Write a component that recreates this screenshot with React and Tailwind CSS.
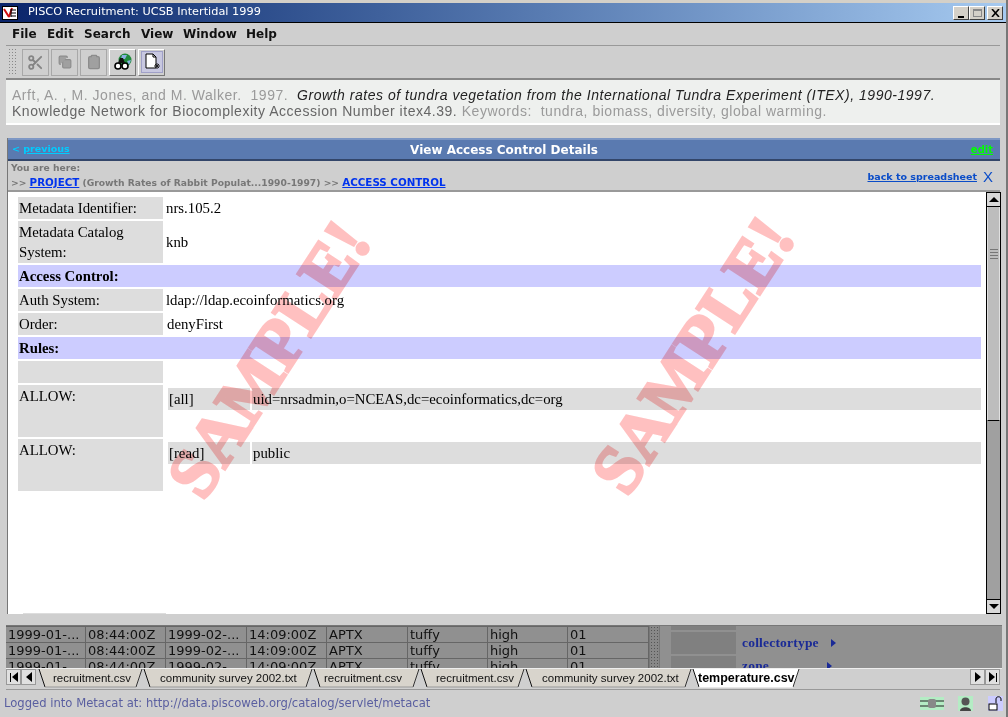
import React from 'react';
import { Scissors, Copy, Clipboard } from 'lucide-react';

const sans = "font-['DejaVu_Sans',sans-serif]";
const arial = "font-['Liberation_Sans',Arial,sans-serif]";
const serif = "font-['Liberation_Serif','Times_New_Roman',serif]";

const menus = [
  { name: 'File', w: 'w-[35px]' },
  { name: 'Edit', w: 'w-[37px]' },
  { name: 'Search', w: 'w-[57px]' },
  { name: 'View', w: 'w-[42px]' },
  { name: 'Window', w: 'w-[63px]' },
  { name: 'Help', w: 'w-[40px]' },
];

const dataRows = [
  ['1999-01-...', '08:44:00Z', '1999-02-...', '14:09:00Z', 'APTX', 'tuffy', 'high', '01'],
  ['1999-01-...', '08:44:00Z', '1999-02-...', '14:09:00Z', 'APTX', 'tuffy', 'high', '01'],
  ['1999-01-...', '08:44:00Z', '1999-02-...', '14:09:00Z', 'APTX', 'tuffy', 'high', '01'],
];

const tabs = [
  { name: 'recruitment.csv', w: 105, pad: 'pl-[15px]' },
  { name: 'community survey 2002.txt', w: 170, pad: 'pl-[17px]' },
  { name: 'recruitment.csv', w: 107, pad: 'pl-[11px]' },
  { name: 'recruitment.csv', w: 105, pad: 'pl-[16px]' },
  { name: 'community survey 2002.txt', w: 167, pad: 'pl-[17px]' },
  { name: 'temperature.csv', w: 108, pad: 'pl-[6px]', active: true },
];

function Tab({ tab }) {
  const h = 19;
  return (
    <div className="relative h-[19px] shrink-0" style={{ width: tab.w }}>
      <svg className="absolute inset-0" width={tab.w} height={h}>
        <polygon
          points={`1,0 7,${h - 1} ${tab.w - 7},${h - 1} ${tab.w - 1},0`}
          fill={tab.active ? '#ffffff' : '#d8d4cc'}
        />
        <line x1="1" y1="0" x2="7" y2={h - 1} stroke="#111" />
        <line x1={tab.w - 7} y1={h - 1} x2={tab.w - 1} y2="0" stroke="#333" />
        <line x1="7" y1={h - 1} x2={tab.w - 7} y2={h - 1} stroke={tab.active ? '#fff' : '#999'} />
      </svg>
      <span
        className={`relative block ${tab.pad} ${arial} leading-[19px] whitespace-nowrap ${tab.active ? 'font-bold text-[12.5px] text-black' : 'text-[11.5px] text-[#111]'}`}
      >
        {tab.name}
      </span>
    </div>
  );
}

function ToolBtn({ children, on }) {
  return (
    <div
      className={`w-[27px] h-[27px] flex items-center justify-center border ${
        on ? 'border-t-white border-l-white border-r-[#777] border-b-[#777]' : 'border-[#a8a8a8]'
      }`}
    >
      {children}
    </div>
  );
}

function NavBtn({ children }) {
  return (
    <div className="w-[15px] h-[16px] flex items-center justify-center bg-[#e0e0e0] border border-[#999] text-black">
      {children}
    </div>
  );
}

function Label({ children, className = '' }) {
  return <div className={`bg-[#dddddd] px-px ${className}`}>{children}</div>;
}

function Sample({ className }) {
  return (
    <div
      className={`absolute ${className} -rotate-[57deg] ${serif} font-bold text-[69px] leading-none text-[#ffc0c0] [-webkit-text-stroke:3px_#ffc0c0] mix-blend-multiply whitespace-nowrap pointer-events-none`}
    >
      SAMPLE!
    </div>
  );
}

const App = () => {
  return (
    <div className="w-[1008px] h-[717px] overflow-hidden bg-[#cfcfcf] flex flex-col border-r-2 border-r-[#777]">
      {/* title bar */}
      <div className="h-[3px] bg-[#d4d0c8] shrink-0" />
      <div className="h-[19px] shrink-0 flex items-center bg-gradient-to-r from-[#0a246a] to-[#a6caf0] pl-[2px] pr-[3px]">
        <svg width="16" height="14" viewBox="0 0 16 14" className="mr-[10px]">
          <rect width="16" height="14" fill="#000" />
          <rect x="1" y="1" width="14" height="12" fill="#fff" />
          <path d="M2 3 L7 11 M7 11 L10 2" stroke="#d01010" strokeWidth="2" fill="none" />
          <path d="M9 4 H14 M9 7 H14 M9 10 H14 M9 3 V11" stroke="#000" strokeWidth="1" fill="none" />
        </svg>
        <span className={`${sans} text-white text-[11.3px] whitespace-nowrap`}>PISCO Recruitment: UCSB Intertidal 1999</span>
        <div className="ml-auto flex items-center">
          <div className="w-[16px] h-[14px] bg-[#d4d0c8] border border-t-white border-l-white border-r-[#404040] border-b-[#404040] flex items-end justify-center pb-[1px]">
            <div className="w-[6px] h-[2px] bg-black" />
          </div>
          <div className="w-[16px] h-[14px] bg-[#d4d0c8] border border-t-white border-l-white border-r-[#404040] border-b-[#404040] flex items-center justify-center">
            <div className="w-[9px] h-[8px] border border-[#888] border-t-2" />
          </div>
          <div className="w-[16px] h-[14px] ml-[2px] bg-[#d4d0c8] border border-t-white border-l-white border-r-[#404040] border-b-[#404040] flex items-center justify-center">
            <svg width="9" height="8" viewBox="0 0 9 8"><path d="M1 0 L8 8 M8 0 L1 8" stroke="#000" strokeWidth="1.6" /></svg>
          </div>
        </div>
      </div>
      <div className="h-[1px] bg-black shrink-0" />

      {/* menu */}
      <div className="h-[22px] flex items-center pl-[12px] shrink-0">
        {menus.map((m) => (
          <span key={m.name} className={`${m.w} ${sans} font-bold text-[12px] text-[#111]`}>
            {m.name}
          </span>
        ))}
      </div>
      <div className="h-[1px] bg-[#999] ml-[6px] mr-[6px] shrink-0" />

      {/* toolbar */}
      <div className="h-[32px] flex items-center pl-[8px] gap-[2px] shrink-0">
        <div className="w-[9px] h-[28px] mr-[3px] bg-[radial-gradient(#888_1px,transparent_1px)] bg-[length:3px_3px]" />
        <ToolBtn><Scissors size={17} strokeWidth={2.6} className="text-[#858585]" /></ToolBtn>
        <ToolBtn><Copy size={14} strokeWidth={2} fill="#a0a0a0" className="text-[#8c8c8c]" /></ToolBtn>
        <ToolBtn><Clipboard size={16} strokeWidth={2} fill="#a0a0a0" className="text-[#8c8c8c]" /></ToolBtn>
        <ToolBtn on>
          <svg width="20" height="18" viewBox="0 0 20 18">
            <circle cx="12" cy="7" r="6.5" fill="#1f8a3a" />
            <path d="M9 2 L14 2 L12 6 L8 6Z" fill="#88b0e0" />
            <path d="M14 8 L18 7 L16 12Z" fill="#88b0e0" />
            <circle cx="5" cy="13" r="3" fill="#fff" stroke="#000" strokeWidth="1.6" />
            <circle cx="12" cy="13" r="3" fill="#fff" stroke="#000" strokeWidth="1.6" />
            <path d="M5 10 L7 5 L10 5 L12 10" fill="#111" />
          </svg>
        </ToolBtn>
        <ToolBtn on>
          <div className="w-[22px] h-[22px] bg-[#c8c8e0] border border-[#a0a0c8] flex items-center justify-center">
            <svg width="16" height="18" viewBox="0 0 16 18">
              <path d="M2 1 H9 L12 4 V15 H2 Z" fill="#fff" stroke="#000" />
              <path d="M9 1 V4 H12" fill="none" stroke="#000" />
              <path d="M11 11 L15 15 M15 11 L11 15 M13 10 V16 M10 13 H16" stroke="#222" />
            </svg>
          </div>
        </ToolBtn>
      </div>

      {/* citation */}
      <div className={`h-[47px] ml-[6px] mr-[6px] shrink-0 bg-[#eef0ee] border-t-2 border-[#888] border-b-2 border-b-white pl-[6px] pt-[7px] ${arial} text-[14px] leading-[16px] tracking-[0.53px] text-[#9a9a9a] whitespace-nowrap overflow-hidden`}>
        <div>
          Arft, A. , M. Jones, and M. Walker.&nbsp; 1997.&nbsp; <i className="text-[#222]">Growth rates of tundra vegetation from the International Tundra Experiment (ITEX), 1990-1997.</i>
        </div>
        <div>
          <span className="text-[#666]">Knowledge Network for Biocomplexity Accession Number itex4.39.</span> Keywords:&nbsp; tundra, biomass, diversity, global warming.
        </div>
      </div>

      <div className="h-[13px] shrink-0" />

      {/* main panel */}
      <div className="relative flex flex-col flex-1 ml-[7px] mr-[3px] min-h-0 border-l border-[#777]">
        <div className={`h-[23px] mr-[3px] shrink-0 relative flex items-center justify-between pl-[4px] pr-[5px] bg-[#5a7ab0] border-t-2 border-t-[#7d97c4] border-b-2 border-b-[#33466a] ${sans}`}>
          <span className="text-[9.5px] font-bold text-[#00ccff]">&lt; <span className="underline">previous</span></span>
          <span className="absolute left-0 right-0 text-center text-[12px] font-bold text-white">View Access Control Details</span>
          <span className="text-[10px] font-bold text-[#00ff00] underline mr-[2px]">edit</span>
        </div>
        <div className={`h-[31px] mr-[3px] shrink-0 flex items-end justify-between bg-[#cfcfcf] border-b-2 border-[#999] pl-[3px] pr-[7px] ${sans} text-[9.2px] font-bold text-[#777] leading-[15px]`}>
          <div>
            <div>You are here:</div>
            <div className="whitespace-nowrap">
              &gt;&gt; <span className="text-[#0033ee] underline text-[10.3px]">PROJECT</span> (Growth Rates of Rabbit Populat...1990-1997) &gt;&gt; <span className="text-[#0033ee] underline text-[10.3px]">ACCESS CONTROL</span>
            </div>
          </div>
          <div className="flex items-center gap-[6px] pb-[6px] text-[#0a4cc8]">
            <span className="underline text-[9.5px]">back to spreadsheet</span>
            <span className={`${arial} font-normal text-[15px]`}>X</span>
          </div>
        </div>

        <div className="relative flex-1 flex min-h-0 bg-white">
          <div className={`relative flex-1 overflow-hidden pl-[10px] pt-[5px] ${serif} text-[14.8px] leading-[22px] text-black`}>
            <div className="grid grid-cols-[145px_816px] gap-[2px]">
              <Label>Metadata Identifier:</Label>
              <div className="pl-px">nrs.105.2</div>

              <Label className="h-[42px] leading-[20px] pt-px">Metadata Catalog<br />System:</Label>
              <div className="pl-px flex items-center">knb</div>

              <div className="col-span-2 bg-[#ccccff] font-bold px-px">Access Control:</div>

              <Label>Auth System:</Label>
              <div className="pl-px">ldap://ldap.ecoinformatics.org</div>

              <Label>Order:</Label>
              <div className="pl-[2px]">denyFirst</div>

              <div className="col-span-2 bg-[#ccccff] font-bold px-px">Rules:</div>

              <Label className="h-[22px]" />
              <div />

              <Label className="h-[52px]">ALLOW:</Label>
              <div className="pl-[3px] pt-[3px]">
                <div className="grid grid-cols-[82px_1fr] gap-[2px]">
                  <div className="bg-[#dddddd] px-px">[all]</div>
                  <div className="bg-[#dddddd] px-px">uid=nrsadmin,o=NCEAS,dc=ecoinformatics,dc=org</div>
                </div>
              </div>

              <Label className="h-[52px]">ALLOW:</Label>
              <div className="pl-[3px] pt-[3px]">
                <div className="grid grid-cols-[82px_1fr] gap-[2px]">
                  <div className="bg-[#dddddd] px-px">[read]</div>
                  <div className="bg-[#dddddd] px-px">public</div>
                </div>
              </div>
            </div>
            <div className="absolute bottom-0 left-[15px] w-[143px] h-px bg-[#ddd]" />
            <Sample className="left-[106px] top-[133px]" />
            <Sample className="left-[530px] top-[129px]" />
          </div>

          {/* scrollbar */}
          <div className="w-[15px] flex flex-col shrink-0 bg-[#a0a0a0] border-x border-black">
            <div className="h-[15px] bg-[#d8d8d8] border-y border-black flex items-center justify-center">
              <div className="w-0 h-0 border-x-[5px] border-x-transparent border-b-[5px] border-b-black" />
            </div>
            <div className="h-[214px] bg-[#bdbdbd] border-x border-[#e0e0e0] border-b border-b-black flex flex-col items-center gap-[2px] pt-[42px]">
              <div className="w-[8px] h-px bg-[#777]" />
              <div className="w-[8px] h-px bg-[#777]" />
              <div className="w-[8px] h-px bg-[#777]" />
              <div className="w-[8px] h-px bg-[#777]" />
            </div>
            <div className="flex-1" />
            <div className="h-[15px] bg-[#d8d8d8] border-y border-black flex items-center justify-center">
              <div className="w-0 h-0 border-x-[5px] border-x-transparent border-t-[5px] border-t-black" />
            </div>
          </div>
          <div className="w-[2px] shrink-0 bg-[#cfcfcf]" />
        </div>
      </div>

      <div className="h-[11px] shrink-0" />

      {/* spreadsheet strip */}
      <div className="h-[44px] shrink-0 ml-[6px] mr-[4px] border-y border-[#eeeeee] flex overflow-hidden bg-[#909090] border-t-[#777]">
        <div className={`w-[643px] shrink-0 ${sans} text-[13px] text-[#111]`}>
          {dataRows.map((row, i) => (
            <div key={i} className="grid grid-cols-[80px_80px_81px_80px_81px_80px_80px_81px] h-[16px] border-t border-[#666]">
              {row.map((c, j) => (
                <div key={j} className="pl-[2px] border-r border-[#666] leading-[15px] whitespace-nowrap overflow-hidden">
                  {c}
                </div>
              ))}
            </div>
          ))}
        </div>
        <div className="w-[11px] shrink-0 bg-[#888] border-x border-[#777] bg-[radial-gradient(#555_1px,transparent_1px)] bg-[length:3px_3px]" />
        <div className="flex-1 flex flex-col gap-[2px] pl-[11px]">
          <div className="h-[4px] shrink-0 w-[65px] bg-[#808080]" />
          <div className="flex items-center h-[22px] shrink-0">
            <div className="w-[65px] h-[22px] bg-[#808080]" />
            <span className={`${serif} font-bold text-[13.5px] tracking-[0.2px] text-[#1a2a96] ml-[6px]`}>collectortype</span>
            <div className="ml-[12px] w-0 h-0 border-y-[4px] border-y-transparent border-l-[5px] border-l-[#1a2a96]" />
          </div>
          <div className="flex items-start h-[14px] shrink-0">
            <div className="w-[65px] h-[14px] bg-[#808080]" />
            <span className={`${serif} font-bold text-[13.5px] tracking-[0.2px] leading-[15px] mt-[2px] text-[#1a2a96] ml-[6px]`}>zone</span>
            <div className="ml-[58px] mt-[6px] w-0 h-0 border-y-[4px] border-y-transparent border-l-[5px] border-l-[#1a2a96]" />
          </div>
        </div>
      </div>

      {/* tabs */}
      <div className="h-[21px] shrink-0 flex items-start ml-[6px] mr-[6px] border-b border-[#999]">
        <NavBtn><div className="w-px h-[9px] bg-black mr-px" /><div className="w-0 h-0 border-y-[5px] border-y-transparent border-r-[6px] border-r-black" /></NavBtn>
        <NavBtn><div className="w-0 h-0 border-y-[5px] border-y-transparent border-r-[6px] border-r-black" /></NavBtn>
        <div className="flex ml-[2px]">
          {tabs.map((t, i) => (
            <Tab key={i} tab={t} />
          ))}
        </div>
        <div className="ml-auto flex">
          <NavBtn><div className="w-0 h-0 border-y-[5px] border-y-transparent border-l-[6px] border-l-black" /></NavBtn>
          <NavBtn><div className="w-0 h-0 border-y-[5px] border-y-transparent border-l-[6px] border-l-black" /><div className="w-px h-[9px] bg-black ml-px" /></NavBtn>
        </div>
      </div>

      {/* status bar */}
      <div className="h-[27px] shrink-0 flex items-center pl-[4px] pr-[3px]">
        <span className={`${sans} text-[11.6px] text-[#5a5fa0] whitespace-nowrap`}>Logged into Metacat at: http://data.piscoweb.org/catalog/servlet/metacat</span>
        <div className="ml-auto flex items-center">
          <svg width="24" height="13" viewBox="0 0 24 13">
            <rect width="24" height="13" fill="#b4ecc4" />
            <path d="M0 4 H24 M0 9 H24" stroke="#222" />
            <rect x="8" y="2" width="8" height="9" rx="2" fill="#888" />
          </svg>
          <svg width="15" height="15" viewBox="0 0 15 15" className="ml-[14px]">
            <rect width="15" height="15" fill="#b4ecc4" />
            <circle cx="7.5" cy="5.5" r="4" fill="#555" />
            <path d="M2 15 C2 10 13 10 13 15Z" fill="#444" />
          </svg>
          <svg width="15" height="15" viewBox="0 0 15 15" className="ml-[15px]">
            <rect width="15" height="15" fill="#ccccff" />
            <rect x="1" y="8" width="8" height="6" fill="#fff" stroke="#000" />
            <path d="M8 7 V3 C8 0 13 0 13 3 V5" fill="none" stroke="#000" />
          </svg>
        </div>
      </div>
    </div>
  );
};

export default App;
